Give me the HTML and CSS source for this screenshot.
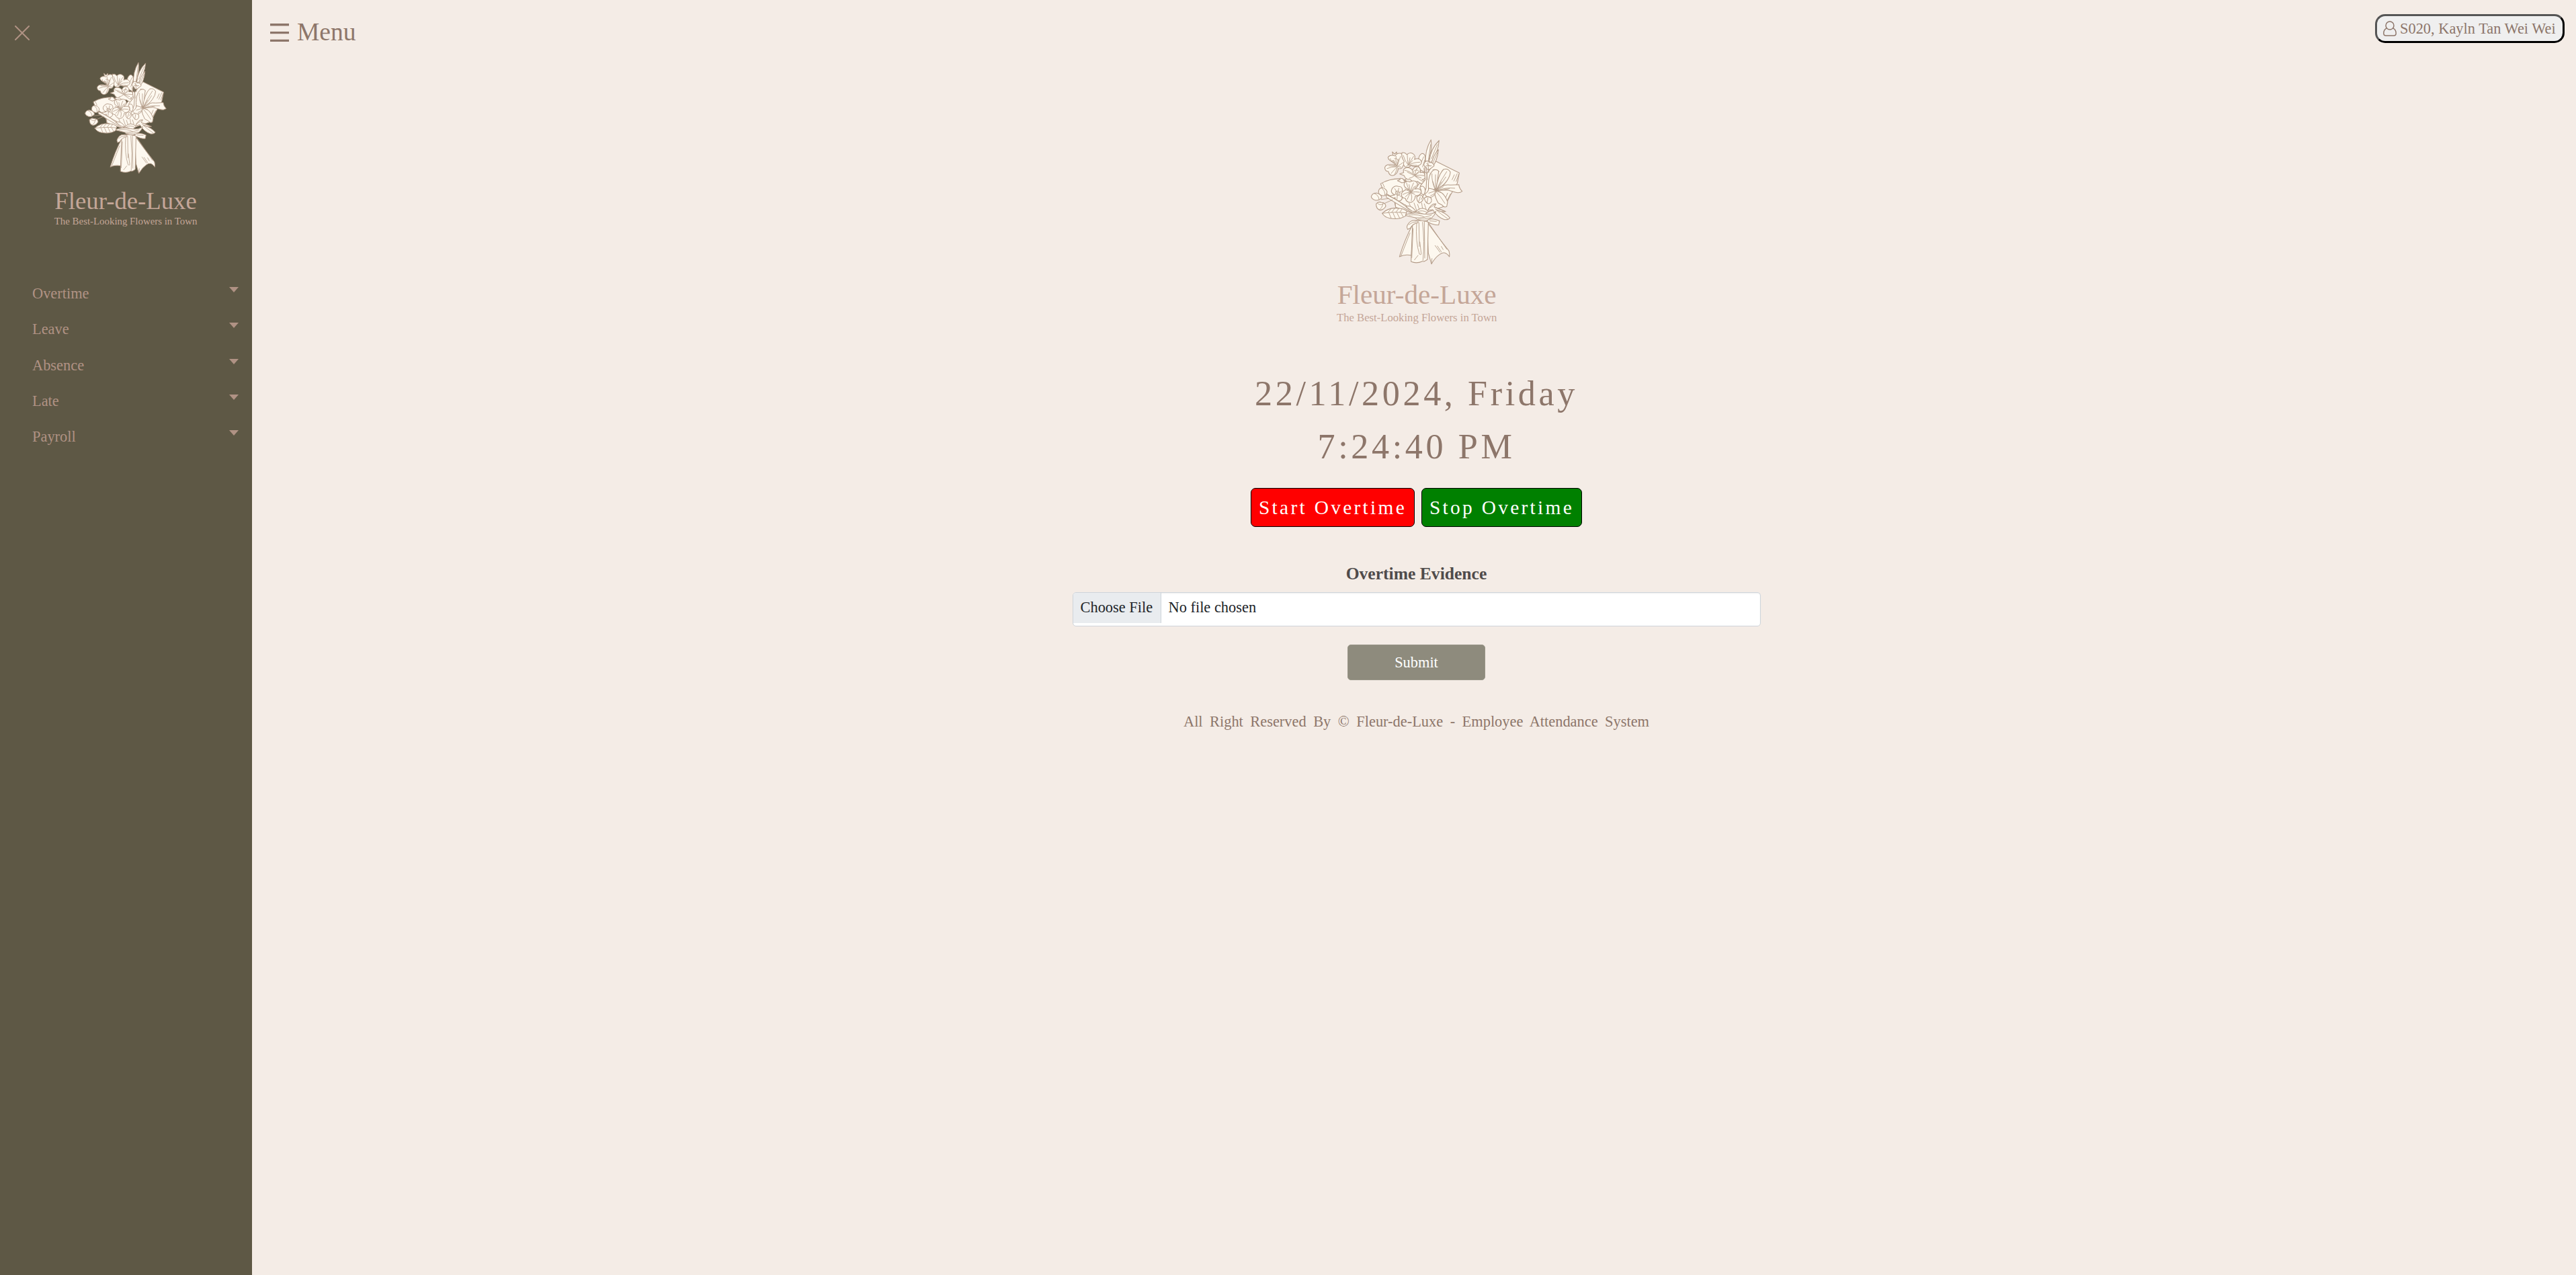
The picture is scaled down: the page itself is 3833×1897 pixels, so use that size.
FILE: index.html
```html
<!DOCTYPE html>
<html lang="en">
<head>
<meta charset="utf-8">
<title>Employee Attendance System</title>
<link rel="stylesheet" href="styles.css">
</head>
<body>
<svg class="defs" aria-hidden="true">
  <symbol id="logo" viewBox="0 0 945 960" preserveAspectRatio="none" overflow="visible">
    <g class="ink">
      <!-- wrapping paper behind the flowers -->
      <path d="M313 280Q355 255 410 258L470 300L560 180L664 232L655 278L625 330L600 380L480 420L380 385L372 345L328 318Z"/>
      <path class="line" d="M322 278L330 296M655 235L640 268M662 238L650 270M642 240L632 262M612 322L600 350M625 325L606 362M378 360L380 384"/>
      <!-- grass blades -->
      <path d="M513 190Q510 130 538 84Q545 130 522 190Z"/>
      <path d="M530 180Q535 125 574 87Q570 140 538 186Z"/>
      <path d="M538 200Q545 155 571 128Q566 180 543 206Z"/>
      <path class="line" d="M527 172L536 105M540 168L566 105M546 188L566 142"/>
      <path d="M478 190Q482 150 498 145Q512 146 512 165L510 230L486 215Z"/>
      <path class="line" d="M505 160L492 190M510 175L500 205"/>
      <!-- top left blossom -->
      <path d="M370 160L365 138L376 148L384 138L386 158Z"/>
      <path d="M378 188Q345 176 346 162Q356 148 378 156Q384 142 402 144Q418 152 417 174Q424 190 412 202Q408 216 392 212Q388 240 366 244Q350 242 348 226Q330 224 332 206Q340 188 378 198Z"/>
      <path class="line" d="M384 200Q360 184 356 168M386 198Q378 176 382 158M388 198Q396 172 402 158M390 202Q404 192 412 186M384 204Q360 204 342 212M386 206Q372 218 360 234M388 206Q384 222 376 238M384 200L368 176M386 200L392 170M384 202L350 200M388 203L404 206M375 168Q388 165 392 178M362 180Q370 172 378 182"/>
      <!-- top middle blossom -->
      <path d="M408 142Q420 138 430 150Q446 136 460 148Q470 156 464 172Q484 162 494 178Q500 194 480 200Q462 206 448 198Q440 210 424 206Q410 196 418 180Q404 160 408 142Z"/>
      <path class="line" d="M436 196Q432 170 432 152M438 194Q448 176 460 158M440 196Q460 184 488 184M438 198Q454 198 474 198M434 194Q420 176 414 154M438 194L444 164M440 194L456 176M428 202L438 196"/>
      <!-- centre blossom -->
      <path d="M388 266L400 262Q395 252 412 258L422 272L408 276ZM420 262Q440 250 456 266L440 276Z"/>
      <path d="M398 236L416 230Q410 212 430 208Q446 208 456 220Q460 202 480 204Q494 212 490 230Q510 226 514 242Q516 258 498 262Q516 268 512 280Q498 286 478 270Q456 274 446 262Q424 262 418 244Z"/>
      <path class="line" d="M464 242Q440 222 420 220M466 240Q468 222 476 210M468 242Q480 232 492 224M468 244Q488 240 508 244M466 246Q484 260 504 272M462 246Q452 254 440 256M464 240L454 222M466 242L486 222M468 246L494 254M464 244L432 228M455 232Q464 214 480 220"/>
      <path d="M508 226L520 234L516 300L504 330L490 290L512 262Z"/>
      <path d="M510 184Q522 172 532 186Q546 182 552 200L534 214Q522 224 516 206Q500 200 510 184Z"/>
      <path class="line" d="M518 190Q526 196 534 202M516 200L540 200M524 186L528 230M517 210L522 262M506 210L510 240M546 218Q560 212 574 226"/>
      <!-- lily -->
      <path d="M528 318Q520 240 548 220Q564 214 572 224Q566 260 566 298L528 318Z"/>
      <path d="M560 306Q568 242 594 216Q614 210 624 228Q624 246 608 268Q592 292 560 306Z"/>
      <path d="M560 310Q590 280 624 286L662 284Q664 302 677 314Q664 324 646 318L612 308Z"/>
      <path d="M560 312Q596 314 612 362L608 382Q596 388 588 376L570 366Q556 342 554 320Z"/>
      <path d="M560 312Q556 338 532 342Q514 338 510 326Q526 318 528 300Q544 302 560 312Z"/>
      <path class="line" d="M558 310Q540 272 542 236M560 308Q556 270 558 240M562 306Q580 268 608 226M562 308Q586 280 604 250M564 310Q602 296 644 300M564 312Q594 306 620 302M560 314Q580 336 600 368M558 316Q552 330 536 334M560 310L584 272M560 310L592 294M560 312L584 320M558 312L528 322M558 308L546 270"/>
      <!-- lower blossoms -->
      <path d="M376 330Q354 320 364 302Q376 286 392 292Q412 292 410 312Q424 324 410 338Q410 356 392 358Q376 356 378 342Q356 350 358 334Z"/>
      <path class="line" d="M388 322L376 302M390 320L394 300M392 322L406 314M390 326L406 340M388 326L386 350M386 324L366 332M380 316Q390 308 398 318Q402 332 388 332Q378 328 380 316"/>
      <path d="M488 296Q500 284 510 300Q516 318 504 330Q492 326 494 310ZM474 340Q494 320 504 344Q500 362 486 366Q474 358 474 340ZM508 344Q524 332 538 344Q546 362 528 370Q512 366 508 344Z"/>
      <path d="M440 306Q414 298 418 278Q426 264 444 272Q464 260 476 276Q482 292 466 304Q492 298 494 314Q492 336 468 334Q466 360 446 364Q426 362 424 346Q402 342 406 324Q414 306 440 306Z"/>
      <path class="line" d="M446 316Q432 294 428 276M448 314Q452 290 460 276M450 316Q468 302 472 288M450 318Q470 314 486 318M448 320Q456 340 450 356M446 320Q436 338 432 350M444 318Q424 320 412 328M446 314L440 284M450 314L464 292M450 320L466 328M444 316L422 304M446 318L424 338M438 310L456 324M438 326L458 310M482 362L490 338M494 350L506 330M520 366L524 344"/>
      <!-- buds and stems -->
      <path d="M338 330Q370 340 470 406L456 410Q396 376 338 340Z"/>
      <path class="line" d="M316 350L350 346M330 368L366 352M346 332Q404 360 440 396M440 366L452 396M462 366L474 400M478 372L486 396M424 374L436 388M508 370L516 394M496 366L500 390"/>
      <path d="M304 320Q302 302 318 298Q336 300 342 316Q340 334 324 334Q308 332 304 320Z"/>
      <path d="M271 338Q276 320 296 322Q316 328 318 342Q308 356 290 354Q274 350 271 338Z"/>
      <path d="M293 370Q304 358 316 364Q334 364 336 380Q328 396 310 398Q292 392 293 370Z"/>
      <path class="line" d="M286 324Q304 330 306 350M298 366Q310 382 326 368M324 368Q320 388 308 396M318 300Q334 312 332 330"/>
      <!-- leaves -->
      <path d="M320 412Q350 384 390 390Q412 388 430 402L424 424Q396 442 354 434Q330 430 320 412Z"/>
      <path class="line" d="M320 412Q380 404 426 410M344 410L358 394M362 408L376 390M380 408L394 391M398 408L408 394M350 410L360 434M368 410L380 437M386 410L398 434M404 410L414 428"/>
      <path d="M524 398Q540 366 560 370L552 384L602 404Q584 408 562 396Q604 410 622 432Q618 442 598 440Q566 430 546 396Z"/>
      <path d="M470 404Q500 376 526 404L510 418ZM426 382Q450 372 472 406L452 402Z"/>
      <path class="line" d="M556 392Q584 418 612 436M526 392Q544 380 556 372M560 386L604 404M480 404Q500 396 520 408"/>
      <path d="M426 418Q456 406 496 414Q540 422 560 404Q548 440 508 446Q480 446 468 432L426 422Z"/>
      <path class="line" d="M440 420Q486 414 510 430M470 432Q510 434 540 420M480 438Q510 440 536 432"/>
      <!-- wrapped stems and ribbon -->
      <path d="M456 462Q420 530 397 606Q420 594 450 600L458 470Z"/>
      <path d="M520 450Q562 510 618 580Q622 594 620 606Q600 576 576 596Q556 610 540 638L526 590Z"/>
      <path d="M456 446Q480 440 526 450L522 618Q506 630 500 626Q474 638 449 628Z"/>
      <path class="line" d="M458 480L452 610M474 454Q468 540 486 594Q496 600 494 590L488 540M484 454L486 560M500 452Q510 540 502 622M508 450L510 612M444 500L404 602M528 456L608 572M556 556L578 586M566 558L584 584M584 560L592 574M542 614L540 636M464 620L480 600"/>
      <path d="M480 448Q450 436 436 460Q426 472 434 484L446 478Q454 460 480 454ZM520 444Q540 430 576 446L572 464Q550 466 522 450Z"/>
      <path class="line" d="M440 462Q454 450 472 450M532 446L562 448"/>
    </g>
    <text class="wordmark" x="119" y="815" textLength="711" lengthAdjust="spacingAndGlyphs">Fleur-de-Luxe</text>
    <text class="tagline" x="117" y="893" textLength="715" lengthAdjust="spacingAndGlyphs">The Best-Looking Flowers in Town</text>
  </symbol>
</svg>
<div class="page">
  <aside class="sidebar">
    <div class="close-row">
      <svg class="close" viewBox="0 0 22 22"><path d="M1 1L21 21M21 1L1 21"/></svg>
    </div>
    <svg class="side-logo"><use href="#logo"/></svg>
    <nav class="nav">
      <a class="nav-item">Overtime<span class="caret"></span></a>
      <a class="nav-item">Leave<span class="caret"></span></a>
      <a class="nav-item">Absence<span class="caret"></span></a>
      <a class="nav-item">Late<span class="caret"></span></a>
      <a class="nav-item">Payroll<span class="caret"></span></a>
    </nav>
  </aside>
  <main class="main">
    <header class="topbar">
      <div class="menu">
        <svg class="burger" viewBox="0 0 28 27"><path d="M0 0H28V3.4H0ZM0 12H28V15.2H0ZM0 23.8H28V27H0Z"/></svg>
        <span>Menu</span>
      </div>
      <button class="user">
        <svg class="user-icon" viewBox="0 0 20 23"><circle cx="10" cy="7" r="6"/><path d="M5.3 10.8C2 12.5 .8 15.5 .8 18.5C.8 21 1.8 22 4 22H16C18.2 22 19.2 21 19.2 18.5C19.2 15.5 18 12.5 14.7 10.8"/></svg>
        <span>S020, Kayln Tan Wei Wei</span>
      </button>
    </header>
    <section class="content">
      <svg class="main-logo"><use href="#logo"/></svg>
      <div class="clock">
        <div>22/11/2024, Friday</div>
        <div>7:24:40 PM</div>
      </div>
      <div class="actions">
        <button class="action start">Start Overtime</button>
        <button class="action stop">Stop Overtime</button>
      </div>
      <div class="label">Overtime Evidence</div>
      <div class="file">
        <span class="file-button">Choose File</span>
        <span class="file-name">No file chosen</span>
      </div>
      <button class="submit">Submit</button>
      <footer class="footer">All Right Reserved By © Fleur-de-Luxe - Employee Attendance System</footer>
    </section>
  </main>
</div>
</body>
</html>
```
FILE: styles.css
```css
* { box-sizing: border-box; }

body {
  margin: 0;
  background: #f4ece6;
  color: #8d766a;
  font-family: "Liberation Serif", "Times New Roman", serif;
  font-size: 22.4px;
}

button { font-family: inherit; }

.defs { position: absolute; width: 0; height: 0; }

.ink path {
  fill: #fdf8ef;
  stroke: #b39b88;
  stroke-width: 3.2;
  stroke-linecap: round;
  stroke-linejoin: round;
}
.ink .line { fill: none; stroke-width: 2.6; }

.wordmark { font-size: 121px; fill: #c4a698; }
.tagline { font-size: 48px; fill: #c4a698; }

.page { display: flex; min-height: 1897px; }

.sidebar {
  width: 375px;
  flex: none;
  background: #5e5845;
  color: #b09284;
}
.close-row { height: 68px; padding: 38px 0 0 22px; }
.close { display: block; width: 22px; height: 22px; }
.close path { stroke: #b09284; stroke-width: 2; stroke-linecap: round; }
.side-logo { display: block; width: 281px; height: 286px; margin-left: 46px; overflow: visible; }

.nav { margin-top: 56.5px; }
.nav-item {
  display: flex;
  justify-content: space-between;
  align-items: center;
  height: 53.3px;
  padding: 0 20px 0 48px;
}
.caret {
  border: 7px solid transparent;
  border-top: 8px solid #b09284;
  border-bottom: 0;
  margin-bottom: 12px;
}

.main { flex: 1; min-width: 0; }

.topbar {
  display: flex;
  justify-content: space-between;
  height: 180px;
  padding: 21px 17px 0 27px;
}
.menu {
  display: flex;
  align-items: center;
  gap: 12px;
  height: 54px;
  font-size: 37.5px;
  line-height: 54px;
}
.burger { width: 28px; height: 27px; fill: #8d766a; }

.user {
  display: flex;
  align-items: center;
  gap: 5px;
  width: 282px;
  height: 43px;
  padding: 0 9px;
  border: 3px solid;
  border-color: #555 #000 #000 #555;
  border-radius: 15px;
  background: #efefef;
  color: #8d766a;
  font-size: 22.4px;
  white-space: nowrap;
}
.user-icon {
  flex: none;
  width: 20px;
  height: 23px;
  margin-bottom: 1px;
  fill: none;
  stroke: #8d766a;
  stroke-width: 1.5;
}

.content {
  display: flex;
  flex-direction: column;
  align-items: center;
  padding-left: 7px;
}
.main-logo { width: 315px; height: 320px; overflow: visible; }

.clock {
  margin-top: 45.5px;
  font-size: 52.2px;
  line-height: 79.4px;
  letter-spacing: 4.6px;
  text-align: center;
}

.actions { display: flex; gap: 10px; margin-top: 21.7px; }
.action {
  height: 58px;
  padding: 0;
  border: 1px solid #000;
  border-radius: 7px;
  color: #fff;
  font-size: 29.4px;
  letter-spacing: 3.3px;
}
.start { width: 244px; background: #f00; }
.stop { width: 239px; background: #008000; }

.label {
  margin-top: 54px;
  line-height: 32px;
  color: #4f4b4b;
  font-size: 25.6px;
  font-weight: bold;
}

.file {
  display: flex;
  width: 1024px;
  height: 51px;
  margin-top: 11px;
  border: 1px solid #ced4da;
  border-radius: 5px;
  background: #fff;
  box-shadow: inset 0 1px 2px rgba(0, 0, 0, 0.075);
  color: #212529;
  line-height: 44px;
  overflow: hidden;
}
.file-button {
  width: 131px;
  height: 45px;
  padding-left: 11px;
  border-right: 1px solid #ced4da;
  background: #e9ecef;
}
.file-name { padding-left: 11px; }

.submit {
  width: 205px;
  height: 53px;
  margin-top: 27px;
  padding: 0;
  border: 1px solid #999688;
  border-radius: 5px;
  background: #8e8b7d;
  color: #fff;
  font-size: 22.4px;
}

.footer { margin-top: 46px; line-height: 32px; word-spacing: 4.9px; }
```
